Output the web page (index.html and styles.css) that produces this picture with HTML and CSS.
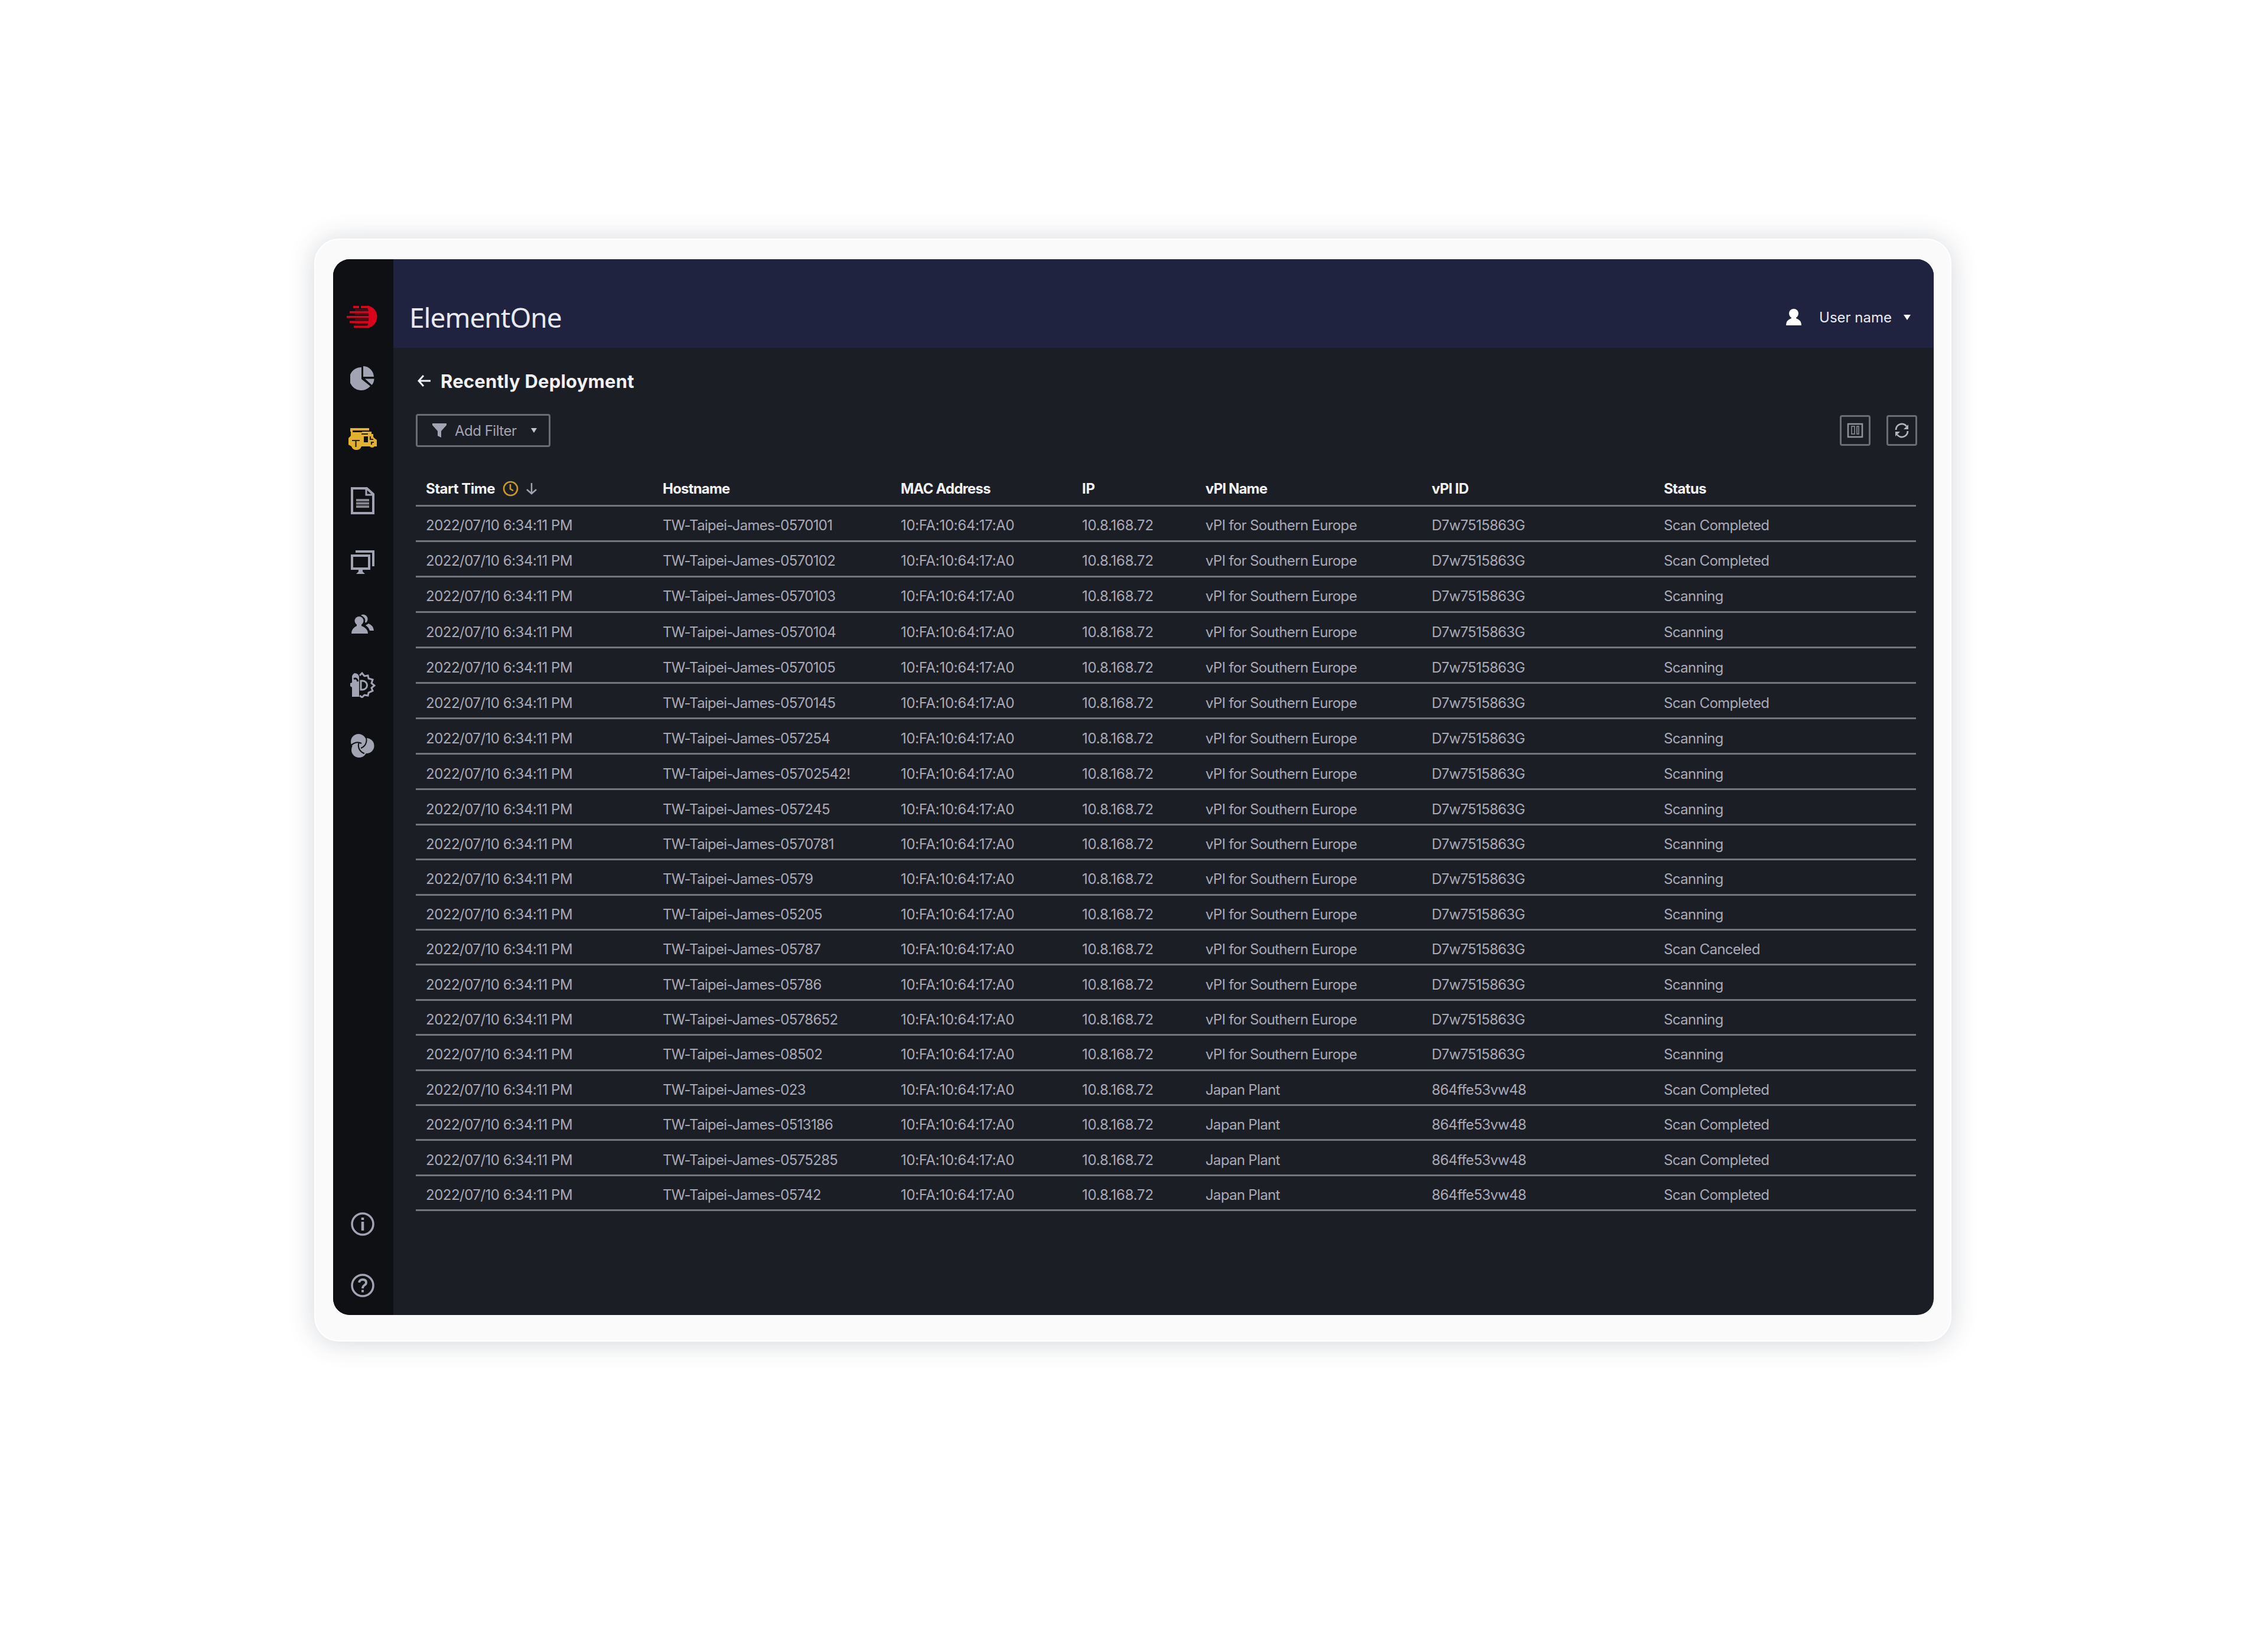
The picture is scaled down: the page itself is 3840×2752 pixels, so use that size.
FILE: index.html
```html
<!DOCTYPE html>
<html lang="en">
<head>
    <meta charset="UTF-8">
    <meta name="viewport" content="width=device-width, initial-scale=1.0">
    <title>ElementOne</title>
    <link rel="stylesheet" href="styles.css">
</head>
<body>
    <div class="frame">
        <div class="app">
            <nav class="sidebar">
                <a class="logo"><svg width="52" height="40" viewBox="0 0 52 40"><path d="M14 8h22M14 15h24M14 24h24M14 31h22" stroke="#5a0812" stroke-width="3"/><path d="M11 1h10v4H11zM24 1h14v4H24zM5 10h35v3.500H5zM0 18h42v3.500H0zM5 26.500h35V30H5zM12 34.500h26V38H12z" fill="#d9041b"/><path d="M31 1h4a16.500 18.500 0 0 1 0 37h-4l5-5q3-13 0-27z" fill="#d9041b"/></svg></a>
                <a><svg width="42" height="42" viewBox="0 0 42 42" fill="#a3a4b3"><path d="M19 2v20l15 12A20 19.500 0 1 1 19 2z"/><path d="M22 0a19 19 0 0 1 18 18H22z"/><path d="M25 21.500h15.500q0 6-4 10.500z"/></svg></a>
                <a><svg width="50" height="40" viewBox="0 0 50 40"><path d="M4 1h32v4H8v3h16V7h16v4h3v5l3 3 3 2v11h-4a5 5 0 0 1-8 0H23a9 9 0 0 1-17 0l-5-3V18l4-4V7H4z" fill="#e3b130"/><path d="M27 15h7v10h-7z" fill="#0f1014"/><path d="M23 11h11M7 22h13M13.500 23v10M38 15v5h5M40 29v-4h4" fill="none" stroke="#2b2414" stroke-width="2.200"/></svg></a>
                <a><svg width="42" height="48" viewBox="0 0 42 48" fill="none" stroke="#a3a4b3" stroke-width="4"><path d="M3 3h25l11 10v32H3z"/><path d="M27 3v11h12" stroke-width="3"/><path d="M10 23h22M10 28.500h22M10 34h22" stroke="#85868f"/></svg></a>
                <a><svg width="42" height="42" viewBox="0 0 42 42" fill="none" stroke="#a3a4b3" stroke-width="4"><path d="M3 10h29v22H3z"/><path d="M9 3h30v25"/><path d="M10 41l4-4v-4h7v4l4 4z" fill="#a3a4b3" stroke="none"/></svg></a>
                <a><svg width="40" height="36" viewBox="0 0 40 36" fill="#a3a4b3"><path d="M17 4a7.500 7.500 0 1 1 8 13l-1-2q2-7-7-11z"/><path d="M25 21l5-3q8 3 9 12h-7q-2-6-7-9z"/><circle cx="14" cy="13.500" r="7.500"/><path d="M1 35q0-9 9-13v-3h8v3q11 4 11 13z"/></svg></a>
                <a><svg width="44" height="44" viewBox="0 0 44 44"><path d="M4 42V26l-3-2v-5l3-1V8q0-3 4-6 8 0 8 8v32z" fill="#a3a4b3"/><path d="M7 12q5-3 7 4" fill="none" stroke="#0f1014" stroke-width="3"/><path d="M17 6l4-4 4 5 6-1 1 5 7 2-2 6 5 4-5 4 2 5-7 3-1 5-6-1-4 4-4-3M19 15h3a7 7 0 0 1 0 15h-3z" fill="none" stroke="#a3a4b3" stroke-width="3"/></svg></a>
                <a><svg width="42" height="42" viewBox="0 0 42 42"><g fill="#a3a4b3"><circle cx="14" cy="14" r="13"/><circle cx="27.500" cy="21" r="13"/><circle cx="15" cy="28" r="13"/></g><path d="M2 20A14 14 0 0 1 19 17M15 15A14 14 0 0 0 24 34M27 8A14 14 0 0 1 18 25" fill="none" stroke="#0f1014" stroke-width="2"/></svg></a>
                <a class="info"><svg width="42" height="42" viewBox="0 0 42 42"><circle cx="21" cy="21" r="18" fill="none" stroke="#a3a4b3" stroke-width="3.500"/><path d="M21 17v15M21 10v4" stroke="#a3a4b3" stroke-width="4.500"/></svg></a>
                <a class="help"><svg width="42" height="42" viewBox="0 0 42 42"><circle cx="21" cy="21" r="18" fill="none" stroke="#a3a4b3" stroke-width="3.500"/><path d="M15 16q1-5 6-5 6 0 6 5 0 3-3 4.500-3 2-3 5.500M21 28.500v4" fill="none" stroke="#a3a4b3" stroke-width="3.800"/></svg></a>
            </nav>
            <div class="content">
                <header class="header">
                    <h1>ElementOne</h1>
                    <div class="user">
                        <svg width="26" height="28" viewBox="0 0 26 28" fill="#fff"><circle cx="13" cy="8" r="8"/><path d="M9 12h8v4q9 3 9 12H0q0-9 9-12z"/></svg>
                        <span class="user-name">User name</span>
                        <svg width="12" height="9" viewBox="0 0 12 9" fill="#fff"><path d="M0 0h12L6 9z"/></svg>
                    </div>
                </header>
                <main class="main">
                    <div class="title">
                        <svg width="22" height="20" viewBox="0 0 22 20" fill="none" stroke="#f1f1f3" stroke-width="3"><path d="M10 1L2 10l8 9M2 10h20"/></svg>
                        <h2>Recently Deployment</h2>
                    </div>
                    <div class="toolbar">
                        <button class="filter">
                            <svg width="24" height="24" viewBox="0 0 24 24" fill="#a3a4b3"><path d="M0 0h24v3l-9 10v11l-6-3v-8L0 3z"/></svg>
                            <span class="filter-text">Add Filter</span>
                            <svg width="10" height="8" viewBox="0 0 10 8" fill="#c4c5cd"><path d="M0 0h10L5 8z"/></svg>
                        </button>
                        <button class="square"><svg width="28" height="26" viewBox="0 0 28 26" fill="none" stroke="#92939e" stroke-width="2.500"><path d="M2 2h24v22H2z"/><path d="M8 6v13h5V6zM17 6v13h3V6z" stroke-width="1.500"/></svg></button>
                        <button class="square"><svg width="26" height="26" viewBox="0 0 26 26" fill="none" stroke="#b4b5bf" stroke-width="2.800"><path d="M3 12A10 10 0 0 1 21 6M23 14A10 10 0 0 1 5 20"/><path d="M24 3v8h-8zM2 23v-8h8z" fill="#b4b5bf" stroke="none"/></svg></button>
                    </div>
                    <table>
                        <thead>
                            <tr>
                                <th class="c-time"><div class="sort">Start Time
                                    <svg width="27" height="27" viewBox="0 0 27 27" fill="none" stroke="#c99a2a" stroke-width="2.600"><circle cx="13.500" cy="13.500" r="11.500"/><path d="M13 6v8l5 3"/></svg>
                                    <svg width="18" height="20" viewBox="0 0 18 20" fill="none" stroke="#a3a4b3" stroke-width="2.500"><path d="M9 0v18M1 11l8 7 8-7"/></svg>
                                </div></th>
                                <th class="c-host">Hostname</th>
                                <th class="c-mac">MAC Address</th>
                                <th class="c-ip">IP</th>
                                <th class="c-name">vPI Name</th>
                                <th class="c-id">vPI ID</th>
                                <th class="c-status">Status</th>
                            </tr>
                        </thead>
                        <tbody id="deployments"></tbody>
                    </table>
                </main>
            </div>
        </div>
    </div>

    <script>
        const hosts = ["0570101", "0570102", "0570103", "0570104", "0570105", "0570145", "057254", "05702542!", "057245", "0570781",
            "0579", "05205", "05787", "05786", "0578652", "08502", "023", "0513186", "0575285", "05742"];
        const completed = [0, 1, 5, 16, 17, 18, 19];
        const table = document.getElementById("deployments");

        hosts.forEach(function (host, i) {
            let japan = i >= 16;
            let status = completed.includes(i) ? "Scan Completed" : i === 12 ? "Scan Canceled" : "Scanning";
            let row = table.insertRow();
            row.innerHTML = `
                <td class="c-time">2022/07/10 6:34:11 PM</td>
                <td class="c-host">TW-Taipei-James-${host}</td>
                <td class="c-mac">10:FA:10:64:17:A0</td>
                <td class="c-ip">10.8.168.72</td>
                <td class="c-name">${japan ? "Japan Plant" : "vPI for Southern Europe"}</td>
                <td class="c-id">${japan ? "864ffe53vw48" : "D7w7515863G"}</td>
                <td class="c-status">${status}</td>
            `;
        });
    </script>
</body>
</html>
```
FILE: styles.css
```css
* {
    box-sizing: border-box;
}
body {
    margin: 0;
    height: 2752px;
    padding: 404px 0 0 532px;
    background: #fff;
    font-family: Inter, "Liberation Sans", sans-serif;
    overflow: hidden;
}
.frame {
    width: 2772px;
    height: 1868px;
    padding: 35px 30px 45px 32px;
    background: #fafafa;
    border: 2px solid #fff;
    border-radius: 42px;
    box-shadow: 0 2px 46px rgba(40, 50, 70, 0.2);
}
.app {
    display: flex;
    width: 2710px;
    height: 1788px;
    margin: -2px 0 0 -2px;
    border-radius: 28px;
    overflow: hidden;
    background: #1c1e26;
}
.sidebar {
    display: flex;
    flex-direction: column;
    width: 102px;
    padding: 46px 2px 0 0;
    background: #0f1014;
}
.sidebar a {
    display: flex;
    align-items: center;
    justify-content: center;
    flex: none;
    height: 103.800px;
}
.sidebar .info {
    margin-top: 706px;
}
.sidebar svg, .user svg, .title svg, .toolbar svg {
    flex: none;
}
.sidebar .logo {
    padding-right: 2px;
}
.content {
    flex: 1;
}
.header {
    display: flex;
    align-items: center;
    justify-content: space-between;
    height: 150px;
    padding: 46px 39px 0 27px;
    background: #1f2340;
    color: #e9eaf1;
}
h1 {
    margin: 0;
    font-family: "Noto Sans", sans-serif;
    font-size: 46px;
    font-weight: 400;
    line-height: 56px;
    letter-spacing: -1px;
}
.user {
    display: flex;
    align-items: center;
    font-size: 24px;
}
.user-name {
    margin: 0 20px 0 30px;
}
.main {
    padding: 32px 28px 0 38px;
}
.title {
    display: flex;
    align-items: center;
    height: 48px;
    padding-left: 3px;
    color: #f1f1f3;
}
h2 {
    margin: 0 0 0 17px;
    font-size: 31px;
    font-weight: 700;
    letter-spacing: 0.200px;
}
.toolbar {
    display: flex;
    gap: 27px;
    margin-top: 32px;
}
button {
    display: flex;
    align-items: center;
    background: transparent;
    border: 3px solid #6b6c75;
    border-radius: 4px;
    font-family: inherit;
    color: #a3a4b3;
}
.filter {
    width: 228px;
    height: 56px;
    padding: 0 0 0 25px;
    margin-right: auto;
    font-size: 24px;
    letter-spacing: -0.500px;
}
.filter-text {
    margin: 0 24px 0 14px;
}
.square {
    width: 52px;
    height: 52px;
    padding: 0;
    margin-top: 2px;
    justify-content: center;
}
table {
    width: 2540px;
    margin-top: 41px;
    table-layout: fixed;
    border-collapse: separate;
    border-spacing: 0;
}
th, td {
    height: 59.400px;
    padding: 7px 0 0 17px;
    border-bottom: 3px solid #74757d;
    text-align: left;
    white-space: nowrap;
    font-size: 24px;
    font-weight: 400;
    color: #a9aab6;
}
tr:nth-child(-n+8) td {
    height: 60.100px;
}
th {
    height: 59.700px;
    padding-top: 3px;
    font-weight: 700;
    color: #f1f1f3;
}
.c-time {
    width: 401px;
    letter-spacing: -0.500px;
}
.c-host {
    width: 403px;
    letter-spacing: -0.700px;
}
.c-mac {
    width: 307px;
    letter-spacing: -0.300px;
}
.c-ip {
    width: 209px;
    letter-spacing: -0.250px;
}
.c-name {
    width: 383px;
    letter-spacing: -0.650px;
}
.c-id {
    width: 393px;
    letter-spacing: -0.700px;
}
.c-status {
    letter-spacing: -0.650px;
}
th.c-host, th.c-mac, th.c-name {
    letter-spacing: -0.800px;
}
.sort {
    display: flex;
    align-items: center;
    gap: 13px;
}
```
